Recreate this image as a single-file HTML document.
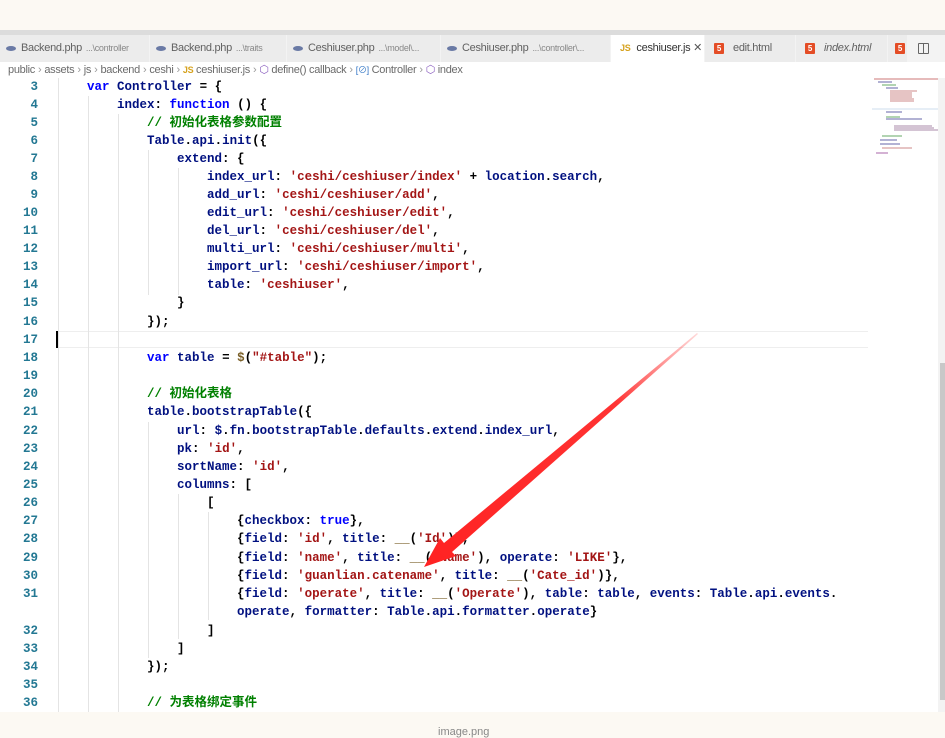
<!DOCTYPE html>
<html><head><meta charset="utf-8"><style>
*{margin:0;padding:0;box-sizing:border-box}
body{width:945px;height:732px;overflow:hidden;background:#fcf9f3;position:relative;font-family:"Liberation Sans","Noto Sans CJK SC",sans-serif}
#top{position:absolute;left:0;top:0;width:945px;height:30px;background:#fcf9f3}
#bar{position:absolute;left:0;top:30px;width:945px;height:5px;background:#dcdcdc}
#tabs{position:absolute;left:0;top:35px;width:945px;height:27px;background:#f3f3f3}
.tab{position:absolute;top:0;height:27px;background:#ececec;border-right:1px solid #f3f3f3;font-size:11px;color:#616161;line-height:27px;padding-left:6px;white-space:nowrap;overflow:hidden;letter-spacing:-0.3px}
.tab small{font-size:9px;color:#888;margin-left:4px}
.tab.act{background:#fff;color:#333}
.php{display:inline-block;width:10px;height:5px;border-radius:50%;background:#6a7aa5;margin-right:5px;vertical-align:middle}
.h5{display:inline-block;width:10px;height:11px;background:#e44d26;color:#fff;font-size:8px;line-height:11px;text-align:center;font-weight:bold;margin-right:9px;vertical-align:middle;border-radius:1px}
.js{color:#d6a21e;font-size:9px;font-weight:bold;margin-right:6px}
#crumb{position:absolute;left:0;top:62px;width:945px;height:16px;background:#fff;font-size:11px;color:#6b6b6b;line-height:16px;padding-left:8px;white-space:nowrap;letter-spacing:-0.3px}
#crumb i{font-style:normal;color:#999;margin:0 3px}
#ed{position:absolute;left:0;top:78px;width:938px;height:634px;background:#fff;overflow:hidden}
.ln{position:absolute;left:0;width:38px;text-align:right;font:bold 12.5px/18px "Liberation Mono",monospace;color:#237893}
.cd{position:absolute;left:57px;font:bold 12.5px/18px "Liberation Mono","Noto Sans CJK SC",monospace;color:#000;white-space:pre}
.k{color:#0000ff}.v{color:#001080}.s{color:#a31515}.c{color:#008000}.f{color:#795e26}
.g{position:absolute;width:1px;background:#e4e4e4}
#cur{position:absolute;left:57px;top:253px;width:811px;height:17px;border-top:1px solid #eee;border-bottom:1px solid #eee}
#mini{position:absolute;left:872px;top:0;width:66px;height:100px}
#sb{position:absolute;left:938px;top:78px;width:7px;height:634px;background:#f3f3f3}
#sb div{position:absolute;left:2px;top:285px;width:5px;height:337px;background:#c8c8c8}
#bot{position:absolute;left:0;top:712px;width:945px;height:20px;background:#fcf9f3;font-size:11px;color:#888}
</style></head><body>
<div id="top"></div><div id="bar"></div>
<div id="tabs">
<div class="tab" style="left:0;width:150px"><span class="php"></span>Backend.php<small>...\controller</small></div>
<div class="tab" style="left:150px;width:137px"><span class="php"></span>Backend.php<small>...\traits</small></div>
<div class="tab" style="left:287px;width:154px"><span class="php"></span>Ceshiuser.php<small>...\model\...</small></div>
<div class="tab" style="left:441px;width:170px"><span class="php"></span>Ceshiuser.php<small>...\controller\...</small></div>
<div class="tab act" style="left:611px;width:94px;padding-left:9px"><span class="js">JS</span>ceshiuser.js <span style="color:#555">✕</span></div>
<div class="tab" style="left:705px;width:91px;padding-left:9px"><span class="h5">5</span>edit.html</div>
<div class="tab" style="left:796px;width:92px;padding-left:9px"><span class="h5">5</span><i>index.html</i></div>
<div class="tab" style="left:888px;width:20px;padding-left:7px"><span class="h5">5</span></div>
<div style="position:absolute;left:918px;top:8px;width:11px;height:11px;border:1px solid #666;border-radius:1px"><div style="position:absolute;left:4px;top:0;width:1px;height:9px;background:#666"></div></div>
</div>
<div id="crumb">public<i>›</i>assets<i>›</i>js<i>›</i>backend<i>›</i>ceshi<i>›</i><span style="color:#d6a21e;font-size:9px;font-weight:bold">JS</span> ceshiuser.js<i>›</i><span style="color:#8b5fbf">⬡</span> define() callback<i>›</i><span style="color:#3477c6;font-size:9px">[⊘]</span> Controller<i>›</i><span style="color:#8b5fbf">⬡</span> index</div>
<div id="ed">
<div id="cur"></div>
<div style="position:absolute;left:56px;top:253px;width:2px;height:17px;background:#000"></div>
<div class="g" style="left:58px;top:0;height:634px"></div>
<div class="g" style="left:88px;top:18px;height:616px"></div>
<div class="g" style="left:118px;top:36px;height:598px"></div>
<div class="g" style="left:148px;top:72px;height:145px"></div>
<div class="g" style="left:178px;top:90px;height:127px"></div>
<div class="g" style="left:148px;top:344px;height:236px"></div>
<div class="g" style="left:178px;top:416px;height:145px"></div>
<div class="g" style="left:208px;top:434px;height:108px"></div>
<svg id="mini" viewBox="0 0 66 100"><g stroke-width="1">
<line x1="2" y1="1" x2="66" y2="1" stroke="#c77"/><line x1="6" y1="4" x2="20" y2="4" stroke="#66a"/><line x1="10" y1="7" x2="24" y2="7" stroke="#6a6"/><line x1="14" y1="10" x2="26" y2="10" stroke="#66a"/>
<line x1="18" y1="13" x2="45" y2="13" stroke="#c88"/><line x1="18" y1="15" x2="40" y2="15" stroke="#c88"/><line x1="18" y1="17" x2="40" y2="17" stroke="#c88"/><line x1="18" y1="19" x2="40" y2="19" stroke="#c88"/><line x1="18" y1="21" x2="42" y2="21" stroke="#c88"/><line x1="18" y1="23" x2="42" y2="23" stroke="#c88"/>
<line x1="0" y1="31" x2="66" y2="31" stroke="#cde"/><line x1="14" y1="34" x2="30" y2="34" stroke="#66a"/><line x1="14" y1="39" x2="28" y2="39" stroke="#6a6"/><line x1="14" y1="41" x2="50" y2="41" stroke="#66a"/>
<line x1="22" y1="48" x2="60" y2="48" stroke="#a8a"/><line x1="22" y1="50" x2="62" y2="50" stroke="#a8a"/><line x1="22" y1="52" x2="66" y2="52" stroke="#a8a"/>
<line x1="10" y1="58" x2="30" y2="58" stroke="#6a6"/><line x1="8" y1="62" x2="25" y2="62" stroke="#66a"/><line x1="8" y1="66" x2="28" y2="66" stroke="#66a"/><line x1="10" y1="70" x2="40" y2="70" stroke="#c88"/><line x1="4" y1="75" x2="16" y2="75" stroke="#a6a"/>
</g></svg>
<div class="ln" style="top:0">3</div><div class="cd" style="top:0">    <span class="k">var</span> <span class="v">Controller</span> = {</div>
<div class="ln" style="top:18px">4</div><div class="cd" style="top:18px">        <span class="v">index</span>: <span class="k">function</span> () {</div>
<div class="ln" style="top:36px">5</div><div class="cd" style="top:36px">            <span class="c">// 初始化表格参数配置</span></div>
<div class="ln" style="top:54px">6</div><div class="cd" style="top:54px">            <span class="v">Table</span>.<span class="v">api</span>.<span class="v">init</span>({</div>
<div class="ln" style="top:72px">7</div><div class="cd" style="top:72px">                <span class="v">extend</span>: {</div>
<div class="ln" style="top:90px">8</div><div class="cd" style="top:90px">                    <span class="v">index_url</span>: <span class="s">'ceshi/ceshiuser/index'</span> + <span class="v">location</span>.<span class="v">search</span>,</div>
<div class="ln" style="top:108px">9</div><div class="cd" style="top:108px">                    <span class="v">add_url</span>: <span class="s">'ceshi/ceshiuser/add'</span>,</div>
<div class="ln" style="top:126px">10</div><div class="cd" style="top:126px">                    <span class="v">edit_url</span>: <span class="s">'ceshi/ceshiuser/edit'</span>,</div>
<div class="ln" style="top:144px">11</div><div class="cd" style="top:144px">                    <span class="v">del_url</span>: <span class="s">'ceshi/ceshiuser/del'</span>,</div>
<div class="ln" style="top:162px">12</div><div class="cd" style="top:162px">                    <span class="v">multi_url</span>: <span class="s">'ceshi/ceshiuser/multi'</span>,</div>
<div class="ln" style="top:180px">13</div><div class="cd" style="top:180px">                    <span class="v">import_url</span>: <span class="s">'ceshi/ceshiuser/import'</span>,</div>
<div class="ln" style="top:198px">14</div><div class="cd" style="top:198px">                    <span class="v">table</span>: <span class="s">'ceshiuser'</span>,</div>
<div class="ln" style="top:216px">15</div><div class="cd" style="top:216px">                }</div>
<div class="ln" style="top:235px">16</div><div class="cd" style="top:235px">            });</div>
<div class="ln" style="top:253px">17</div>
<div class="ln" style="top:271px">18</div><div class="cd" style="top:271px">            <span class="k">var</span> <span class="v">table</span> = <span class="f">$</span>(<span class="s">"#table"</span>);</div>
<div class="ln" style="top:289px">19</div>
<div class="ln" style="top:307px">20</div><div class="cd" style="top:307px">            <span class="c">// 初始化表格</span></div>
<div class="ln" style="top:325px">21</div><div class="cd" style="top:325px">            <span class="v">table</span>.<span class="v">bootstrapTable</span>({</div>
<div class="ln" style="top:344px">22</div><div class="cd" style="top:344px">                <span class="v">url</span>: <span class="v">$</span>.<span class="v">fn</span>.<span class="v">bootstrapTable</span>.<span class="v">defaults</span>.<span class="v">extend</span>.<span class="v">index_url</span>,</div>
<div class="ln" style="top:362px">23</div><div class="cd" style="top:362px">                <span class="v">pk</span>: <span class="s">'id'</span>,</div>
<div class="ln" style="top:380px">24</div><div class="cd" style="top:380px">                <span class="v">sortName</span>: <span class="s">'id'</span>,</div>
<div class="ln" style="top:398px">25</div><div class="cd" style="top:398px">                <span class="v">columns</span>: [</div>
<div class="ln" style="top:416px">26</div><div class="cd" style="top:416px">                    [</div>
<div class="ln" style="top:434px">27</div><div class="cd" style="top:434px">                        {<span class="v">checkbox</span>: <span class="k">true</span>},</div>
<div class="ln" style="top:452px">28</div><div class="cd" style="top:452px">                        {<span class="v">field</span>: <span class="s">'id'</span>, <span class="v">title</span>: <span class="f">__</span>(<span class="s">'Id'</span>)},</div>
<div class="ln" style="top:471px">29</div><div class="cd" style="top:471px">                        {<span class="v">field</span>: <span class="s">'name'</span>, <span class="v">title</span>: <span class="f">__</span>(<span class="s">'Name'</span>), <span class="v">operate</span>: <span class="s">'LIKE'</span>},</div>
<div class="ln" style="top:489px">30</div><div class="cd" style="top:489px">                        {<span class="v">field</span>: <span class="s">'guanlian.catename'</span>, <span class="v">title</span>: <span class="f">__</span>(<span class="s">'Cate_id'</span>)},</div>
<div class="ln" style="top:507px">31</div><div class="cd" style="top:507px">                        {<span class="v">field</span>: <span class="s">'operate'</span>, <span class="v">title</span>: <span class="f">__</span>(<span class="s">'Operate'</span>), <span class="v">table</span>: <span class="v">table</span>, <span class="v">events</span>: <span class="v">Table</span>.<span class="v">api</span>.<span class="v">events</span>.</div>
<div class="cd" style="top:525px">                        <span class="v">operate</span>, <span class="v">formatter</span>: <span class="v">Table</span>.<span class="v">api</span>.<span class="v">formatter</span>.<span class="v">operate</span>}</div>
<div class="ln" style="top:544px">32</div><div class="cd" style="top:544px">                    ]</div>
<div class="ln" style="top:562px">33</div><div class="cd" style="top:562px">                ]</div>
<div class="ln" style="top:580px">34</div><div class="cd" style="top:580px">            });</div>
<div class="ln" style="top:598px">35</div>
<div class="ln" style="top:616px">36</div><div class="cd" style="top:616px">            <span class="c">// 为表格绑定事件</span></div>
</div>
<div id="sb"><div></div></div>
<svg style="position:absolute;left:0;top:0" width="945" height="732"><defs><linearGradient id="gr" x1="697" y1="333" x2="425" y2="566" gradientUnits="userSpaceOnUse"><stop offset="0" stop-color="#f44" stop-opacity="0.2"/><stop offset="0.3" stop-color="#f33"/><stop offset="1" stop-color="#f22"/></linearGradient></defs>
<polygon points="697,333 698,334 452,552 456,556 424,567 440,538 444,543" fill="url(#gr)"/></svg>
<div id="bot"><span style="position:absolute;left:438px;top:14px">image.png</span></div>
</body></html>
